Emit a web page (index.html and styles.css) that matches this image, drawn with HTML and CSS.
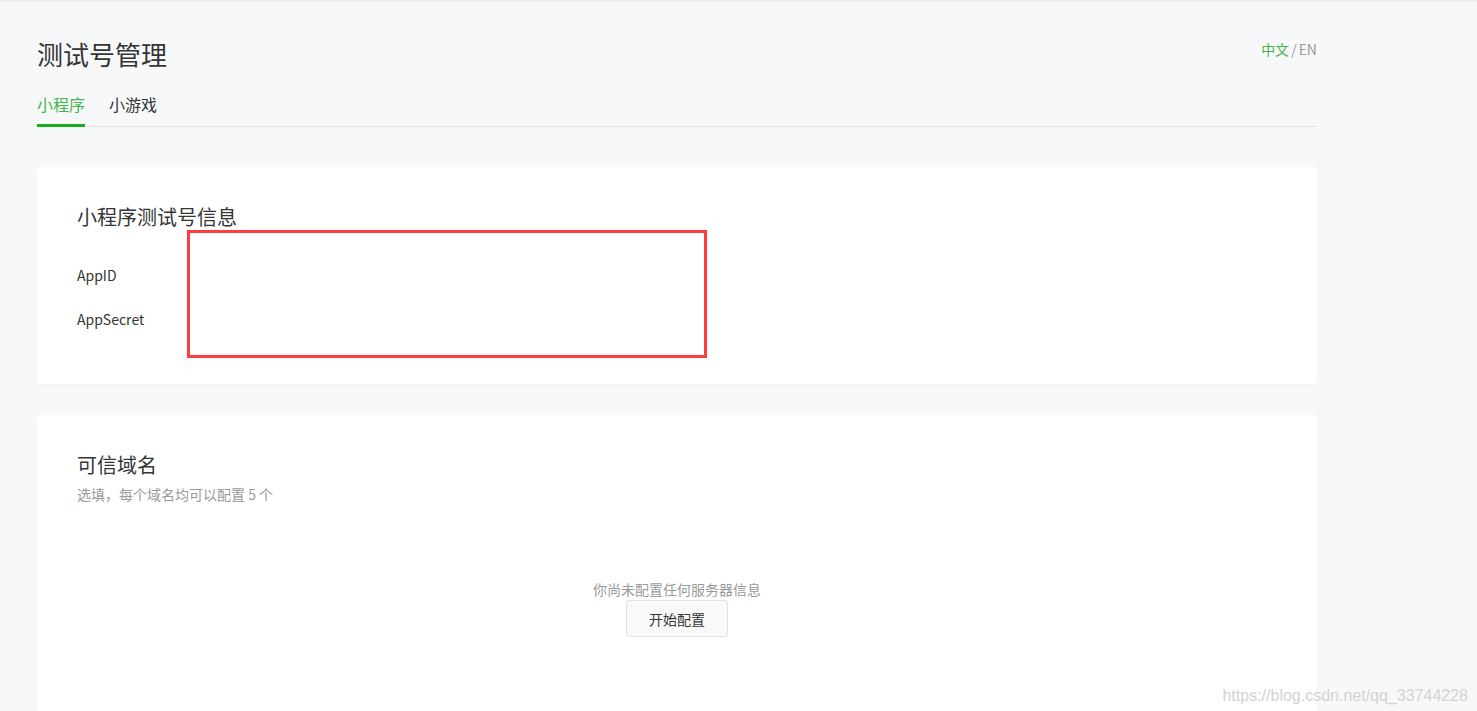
FILE: index.html
```html
<!DOCTYPE html>
<html lang="zh-CN">
<head>
    <meta charset="UTF-8">
    <meta name="viewport" content="width=device-width, initial-scale=1.0">
    <title>测试号管理</title>
    <link rel="stylesheet" href="styles.css">
</head>
<body>
    <div class="page">
        <div class="header">
            <h1 class="title">测试号管理</h1>
            <div class="lang"><a class="lang-on">中文</a><span class="lang-sep">/</span><a class="lang-off">EN</a></div>
        </div>
        <div class="tabs">
            <a class="tab active">小程序</a>
            <a class="tab">小游戏</a>
        </div>

        <!-- 测试号信息 -->
        <div class="card info">
            <h2 class="card-title">小程序测试号信息</h2>
            <div class="info-row">AppID</div>
            <div class="info-row">AppSecret</div>
            <div class="mark"></div>
        </div>

        <!-- 可信域名 -->
        <div class="card domain">
            <h2 class="card-title">可信域名</h2>
            <p class="card-desc">选填，每个域名均可以配置 5 个</p>
            <div class="empty">
                <p class="empty-text">你尚未配置任何服务器信息</p>
                <button class="btn">开始配置</button>
            </div>
        </div>
    </div>
    <div class="watermark">https://blog.csdn.net/qq_33744228</div>
</body>
</html>
```

FILE: styles.css
```css
html, body {
    margin: 0;
    height: 100%;
    overflow: hidden;
}
body {
    background-color: #f7f8fa;
    border-top: 2px solid #ebecee;
    box-sizing: border-box;
    font-family: "Noto Sans CJK SC", "Noto Sans", sans-serif;
    color: #353535;
    position: relative;
}
.page { /* contenido a la izquierda, ancho fijo */
    width: 1280px;
    margin-left: 37px;
}
.header {
    display: flex;
    justify-content: space-between;
    align-items: flex-start;
    padding-top: 34px;
}
.title {
    margin: 0;
    font-size: 26px;
    font-weight: normal;
    line-height: 36px;
    color: #353535;
}
.lang {
    font-size: 14px;
    line-height: 22px;
    margin-top: 2px;
    color: #9a9a9a;
}
.lang-on { color: #44b549; }
.lang-sep { margin: 0 2px; }
.tabs { /* pestañas con la linea gris debajo */
    display: flex;
    gap: 24px;
    margin-top: 21px;
    border-bottom: 1px solid #e0e1e3;
}
.tab {
    font-size: 16px;
    line-height: 22px;
    padding-bottom: 9px;
    margin-bottom: -1px;
    border-bottom: 3px solid transparent;
    color: #353535;
    cursor: pointer;
}
.tab.active {
    color: #44b549;
    border-bottom-color: #1aad19;
}
.card {
    background-color: #fff;
    border-radius: 4px;
    box-shadow: 0 1px 3px rgba(0, 0, 0, 0.04);
    padding: 36px 40px 0;
    position: relative;
}
.card-title {
    margin: 0;
    font-size: 20px;
    font-weight: normal;
    line-height: 28px;
    color: #353535;
}
.info {
    margin-top: 40px;
    box-sizing: border-box;
    height: 217px;
}
.card-title + .info-row {
    margin-top: 22px;
}
.info-row {
    font-size: 14px;
    line-height: 44px;
    color: #353535;
}
.mark { /* recuadro rojo que tapa los datos */
    position: absolute;
    left: 150px;
    top: 63px;
    width: 514px;
    height: 122px;
    border: 3px solid #ff3d3d;
}
.domain {
    margin-top: 31px;
    height: 400px;
}
.card-desc {
    margin: 5px 0 0;
    font-size: 14px;
    line-height: 20px;
    color: #9a9a9a;
}
.empty {
    margin-top: 75px;
    display: flex;
    flex-direction: column;
    align-items: center;
}
.empty-text {
    margin: 0;
    font-size: 14px;
    line-height: 20px;
    color: #9a9a9a;
}
.btn {
    margin-top: 1px;
    height: 37px;
    padding: 0 22px;
    font-family: "Noto Sans CJK SC", sans-serif;
    font-size: 14px;
    color: #353535;
    background-color: #f9f9f9;
    border: 1px solid #e2e2e2;
    border-radius: 3px;
    cursor: pointer;
}
.watermark {
    position: absolute;
    right: 9px;
    bottom: 6px;
    font-family: "Liberation Sans", Arial, sans-serif;
    font-size: 16px;
    color: #d2d2d2;
    text-shadow: 0 0 1px #fff;
}
```
